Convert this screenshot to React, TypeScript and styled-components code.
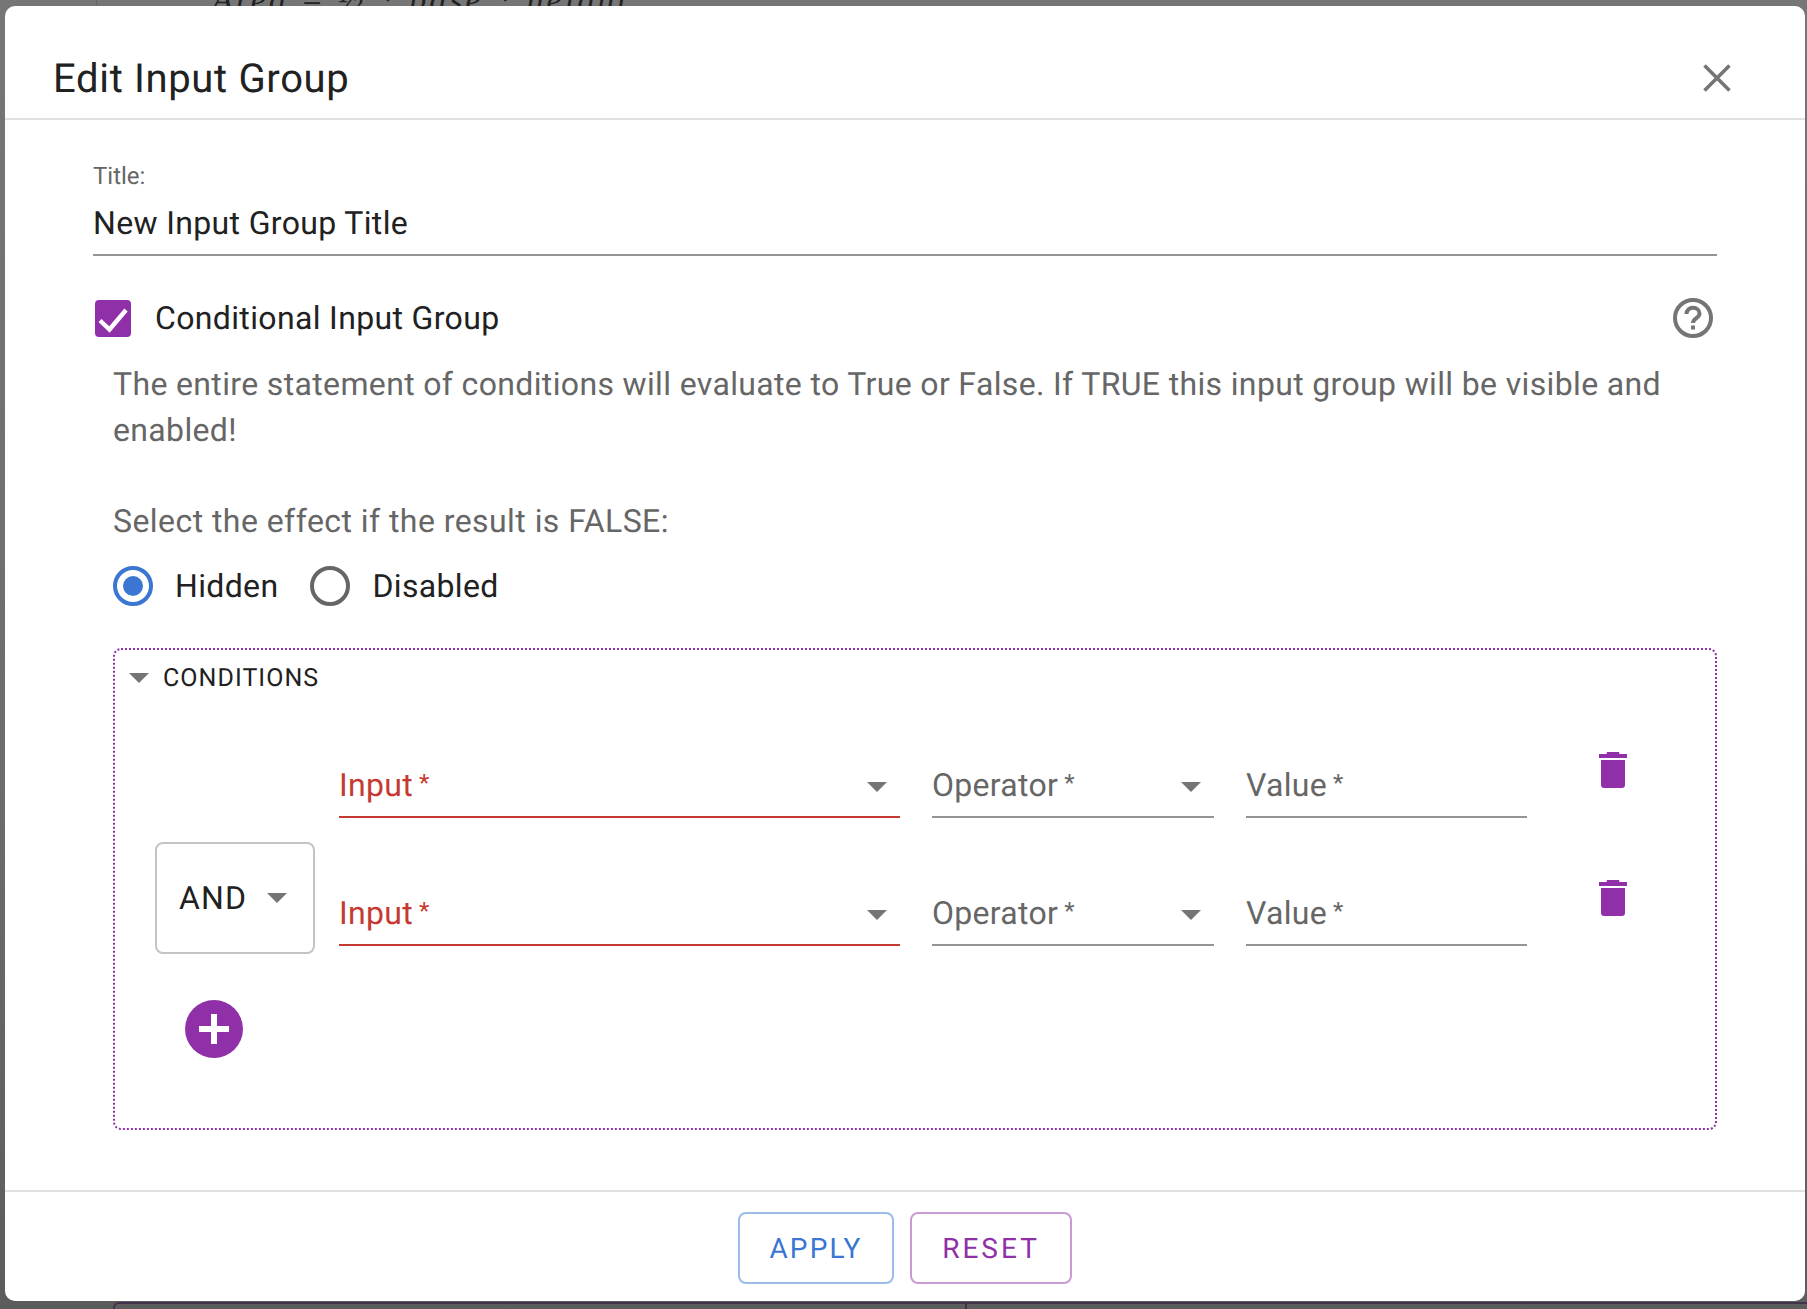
import styled, { createGlobalStyle } from 'styled-components';

const PURPLE = '#9030a8';
const BLUE = '#3a76d2';
const ERROR = '#c43a31';
const FONT = 'Roboto, "Liberation Sans", Arial, sans-serif';

const GlobalStyle = createGlobalStyle`
  html, body {
    margin: 0;
    padding: 0;
    width: 1807px;
    height: 1309px;
    overflow: hidden;
    background: #696969;
    text-rendering: geometricPrecision;
  }
  * {
    box-sizing: border-box;
  }
`;

const Backdrop = styled.div`
  position: relative;
  width: 1807px;
  height: 1309px;
  padding: 6px 2px 8px 5px;
  overflow: hidden;
  background: linear-gradient(180deg, #767676 0%, #6c6c6c 60%, #5c5c5c 100%);
  font-family: ${FONT};
`;

const BehindFormula = styled.div`
  position: absolute;
  top: -18px;
  left: 212px;
  color: #222;
  font-family: 'Liberation Serif', serif;
  font-size: 34px;
  font-style: italic;
  letter-spacing: 3px;
  white-space: nowrap;
`;

const BehindRule = styled.div`
  position: absolute;
  top: 0;
  left: 96px;
  width: 1px;
  height: 6px;
  background: #666;
`;

const BehindCard = styled.div`
  position: absolute;
  top: 1302px;
  left: 113px;
  width: 1700px;
  height: 40px;
  border-top: 2px solid #43324d;
  border-left: 2px solid #43324d;
  border-top-left-radius: 6px;

  &::after {
    content: '';
    position: absolute;
    top: 0;
    left: 850px;
    width: 2px;
    height: 40px;
    background: #43324d;
  }
`;

const Modal = styled.div`
  position: relative;
  display: flex;
  flex-direction: column;
  width: 1800px;
  height: 1295px;
  border-radius: 10px;
  background: #fff;
`;

const Header = styled.header`
  display: flex;
  align-items: center;
  justify-content: space-between;
  height: 114px;
  padding: 32px 73px 0 48px;
  border-bottom: 2px solid #e0e0e0;
`;

const Heading = styled.h2`
  margin: 0;
  color: #212121;
  font-size: 40px;
  font-weight: 400;
  letter-spacing: 0.66px;
`;

const CloseIcon = styled.svg`
  width: 30px;
  height: 30px;
`;

const Body = styled.div`
  display: flex;
  flex: 1;
  flex-direction: column;
  padding: 42px 88px 0;
`;

const TitleLabel = styled.label`
  color: #666;
  font-size: 24px;
  line-height: 28px;
`;

const TitleInput = styled.div`
  height: 66px;
  padding-top: 14px;
  border-bottom: 2px solid #949494;
  color: #212121;
  font-size: 32px;
  line-height: 38px;
  letter-spacing: 0.35px;
`;

const CheckRow = styled.div`
  display: flex;
  align-items: center;
  height: 40px;
  margin-top: 42px;
  padding-left: 2px;
`;

const CheckBox = styled.span`
  display: flex;
  width: 36px;
  height: 37px;
  border-radius: 4px;
  background: ${PURPLE};
`;

const CheckLabel = styled.span`
  flex: 1;
  margin-left: 24px;
  color: #212121;
  font-size: 32px;
  letter-spacing: 0.35px;
`;

const HelpIcon = styled.svg`
  width: 40px;
  height: 40px;
  margin-right: 4px;
`;

const Indented = styled.div`
  display: flex;
  flex-direction: column;
  padding-left: 20px;
`;

const Description = styled.p`
  margin: 23px 0 0;
  color: #666;
  font-size: 32px;
  line-height: 46px;
  letter-spacing: 0.35px;
`;

const EffectLabel = styled.p`
  margin: 45px 0 0;
  color: #666;
  font-size: 32px;
  line-height: 46px;
  letter-spacing: 0.44px;
`;

const RadioRow = styled.div`
  display: flex;
  align-items: center;
  height: 40px;
  margin-top: 22px;
`;

const Radio = styled.span<{ $checked?: boolean }>`
  display: flex;
  align-items: center;
  justify-content: center;
  width: 40px;
  height: 40px;
  border: 4px solid ${({ $checked }) => ($checked ? BLUE : '#666')};
  border-radius: 50%;

  &::after {
    content: '';
    display: ${({ $checked }) => ($checked ? 'block' : 'none')};
    width: 20px;
    height: 20px;
    border-radius: 50%;
    background: ${BLUE};
  }
`;

const RadioLabel = styled.span`
  margin: 0 32px 0 22px;
  color: #212121;
  font-size: 32px;
  letter-spacing: 0.35px;
`;

const Conditions = styled.section`
  display: flex;
  flex-direction: column;
  height: 482px;
  margin-top: 42px;
  padding: 13px 0 0 14px;
  border: 2px dotted ${PURPLE};
  border-radius: 8px;
`;

const ConditionsHead = styled.div`
  display: flex;
  align-items: center;
  height: 30px;
  color: #212121;
  font-size: 25px;
  letter-spacing: 1.05px;
`;

const Caret = styled.span<{ $drop?: boolean }>`
  flex: none;
  width: 0;
  height: 0;
  margin-top: ${({ $drop }) => ($drop ? '4px' : '0')};
  border-top: 10px solid #757575;
  border-right: 10px solid transparent;
  border-left: 10px solid transparent;
`;

const ConditionsTitle = styled.span`
  margin-left: 14px;
`;

const Rows = styled.div`
  display: flex;
  flex-direction: column;
  gap: 26px;
  margin-top: 23px;
  padding-left: 26px;
`;

const Row = styled.div`
  display: grid;
  grid-template-columns: 184px 561px 314px 313px 1fr;
  grid-template-rows: 102px;
  align-items: end;
  height: 102px;
`;

const JoinSelect = styled.div`
  display: flex;
  align-items: center;
  justify-content: space-between;
  width: 160px;
  height: 112px;
  margin-bottom: -8px;
  padding: 0 26px 0 22px;
  border: 2px solid #c4c4c4;
  border-radius: 8px;
  color: #212121;
  font-size: 32px;
  letter-spacing: 1.2px;
`;

const Field = styled.div<{ $error?: boolean; $gap?: boolean }>`
  display: flex;
  align-items: center;
  justify-content: space-between;
  height: 58px;
  margin-left: ${({ $gap }) => ($gap ? '32px' : '0')};
  padding: 0 13px 6px 0;
  border-bottom: 2px solid ${({ $error }) => ($error ? ERROR : '#949494')};
  color: ${({ $error }) => ($error ? ERROR : '#666')};
  font-size: 32px;
  letter-spacing: 0.3px;
`;

const Star = styled.span`
  margin-left: 6px;
  font-size: 24px;
  vertical-align: 5px;
`;

const TrashCell = styled.div`
  display: flex;
  height: 102px;
  padding: 36px 0 0 72px;
`;

const AddButton = styled.button`
  display: flex;
  align-items: center;
  justify-content: center;
  width: 58px;
  height: 58px;
  margin: 54px 0 0 56px;
  padding: 0;
  border: none;
  border-radius: 50%;
  background: ${PURPLE};
`;

const Footer = styled.footer`
  display: flex;
  gap: 16px;
  justify-content: center;
  height: 111px;
  padding-top: 20px;
  border-top: 2px solid #e0e0e0;
`;

const ActionButton = styled.button<{
  $color: string;
  $border: string;
  $width: number;
  $spacing: number;
}>`
  width: ${({ $width }) => $width}px;
  height: 72px;
  border: 2px solid ${({ $border }) => $border};
  border-radius: 8px;
  background: #fff;
  color: ${({ $color }) => $color};
  font-family: ${FONT};
  font-size: 28px;
  letter-spacing: ${({ $spacing }) => $spacing}px;
  text-rendering: geometricPrecision;
`;

function Trash() {
  return (
    <svg width="28" height="36" viewBox="0 0 28 36">
      <path
        fill={PURPLE}
        d="M0 2h7.6l.4-2h12l.4 2H28v4H0zM2 8h24v25c0 1.7-1.3 3-3 3H5c-1.7 0-3-1.3-3-3z"
      />
    </svg>
  );
}

function ConditionFields() {
  return (
    <>
      <Field $error>
        <span>
          Input<Star>*</Star>
        </span>
        <Caret $drop />
      </Field>
      <Field $gap>
        <span>
          Operator<Star>*</Star>
        </span>
        <Caret $drop />
      </Field>
      <Field $gap>
        <span>
          Value<Star>*</Star>
        </span>
      </Field>
      <TrashCell>
        <Trash />
      </TrashCell>
    </>
  );
}

/** edit input group dialog */
export default function App() {
  return (
    <Backdrop>
      <GlobalStyle />
      <BehindRule />
      <BehindFormula>Area = ½ * base * height</BehindFormula>
      <BehindCard />
      <Modal>
        <Header>
          <Heading>Edit Input Group</Heading>
          <CloseIcon viewBox="0 0 30 30">
            <path d="M2.5 2.5l25 25M27.5 2.5l-25 25" stroke="#757575" strokeWidth="3.6" fill="none" />
          </CloseIcon>
        </Header>
        <Body>
          <TitleLabel>Title:</TitleLabel>
          <TitleInput>New Input Group Title</TitleInput>
          <CheckRow>
            <CheckBox>
              <svg width="36" height="37" viewBox="0 0 36 37">
                <path d="M5 20.5l9.5 9L31 10" stroke="#fff" strokeWidth="4.4" fill="none" />
              </svg>
            </CheckBox>
            <CheckLabel>Conditional Input Group</CheckLabel>
            <HelpIcon viewBox="0 0 40 40">
              <circle cx="20" cy="20" r="18" stroke="#757575" strokeWidth="4" fill="none" />
              <path
                d="M13.5 16c0-3.8 2.8-6.2 6.5-6.2s6.5 2.4 6.5 5.6c0 4.6-6.5 4.8-6.5 9.6"
                stroke="#757575"
                strokeWidth="4"
                fill="none"
              />
              <rect x="18" y="27.5" width="4" height="4" fill="#757575" />
            </HelpIcon>
          </CheckRow>
          <Indented>
            <Description>
              The entire statement of conditions will evaluate to True or False. If TRUE this input
              group will be visible and enabled!
            </Description>
            <EffectLabel>Select the effect if the result is FALSE:</EffectLabel>
            <RadioRow>
              <Radio $checked />
              <RadioLabel>Hidden</RadioLabel>
              <Radio />
              <RadioLabel>Disabled</RadioLabel>
            </RadioRow>
            <Conditions>
              <ConditionsHead>
                <Caret />
                <ConditionsTitle>CONDITIONS</ConditionsTitle>
              </ConditionsHead>
              <Rows>
                <Row>
                  <span />
                  <ConditionFields />
                </Row>
                <Row>
                  <JoinSelect>
                    AND
                    <Caret />
                  </JoinSelect>
                  <ConditionFields />
                </Row>
              </Rows>
              <AddButton>
                <svg width="30" height="30" viewBox="0 0 30 30">
                  <path d="M15 0v30M0 15h30" stroke="#fff" strokeWidth="6" fill="none" />
                </svg>
              </AddButton>
            </Conditions>
          </Indented>
        </Body>
        <Footer>
          <ActionButton $color={BLUE} $border="#9cbde9" $width={156} $spacing={2.2}>
            APPLY
          </ActionButton>
          <ActionButton $color={PURPLE} $border="#c99ad4" $width={162} $spacing={3}>
            RESET
          </ActionButton>
        </Footer>
      </Modal>
    </Backdrop>
  );
}
